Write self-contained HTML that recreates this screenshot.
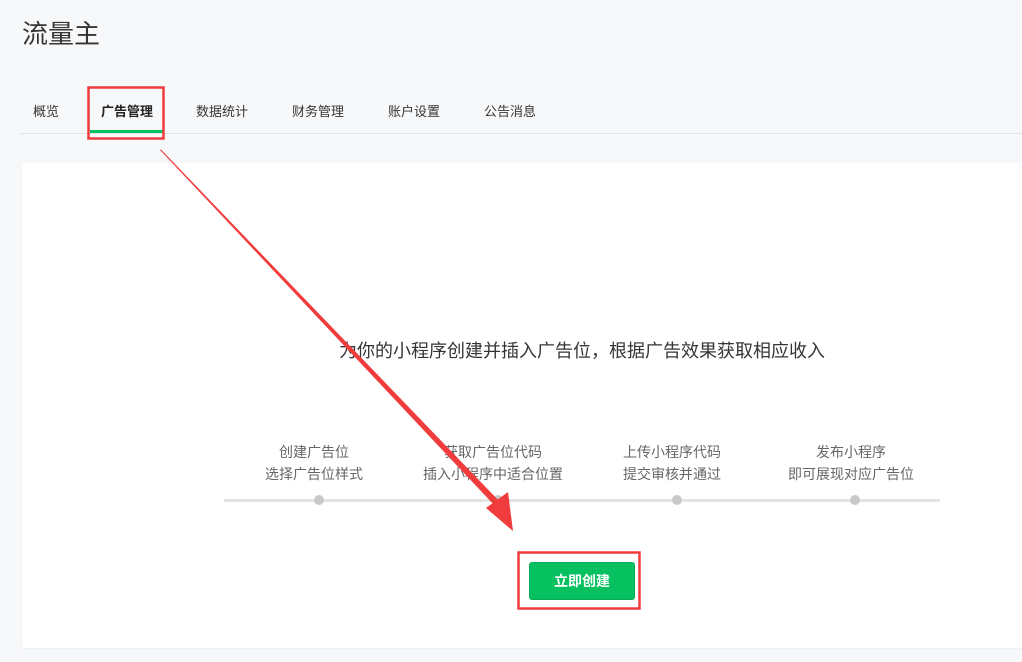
<!DOCTYPE html>
<html><head><meta charset="utf-8"><style>
body{margin:0;width:1022px;height:662px;background:#f7f8fa;font-family:"Liberation Sans","Noto Sans CJK SC",sans-serif;position:relative;overflow:hidden;color:#353535}
.abs{position:absolute}
.title{left:22px;top:14px;font-size:26px;color:#353535}
.tab{top:101px;font-size:13px;color:#353535}
.card{left:22px;top:163px;width:1010px;height:485px;background:#fff;border-radius:3px;box-shadow:0 1px 2px rgba(0,0,0,.05)}
.step{width:200px;text-align:center;font-size:14px;color:#666;line-height:22px;top:441px}
.dot{width:10px;height:10px;border-radius:50%;background:#c8c8c8;top:495px}
</style></head><body>
<div class="abs title">流量主</div>
<div class="abs tab" style="left:33px">概览</div>
<div class="abs tab" style="left:101px;font-weight:bold;color:#222">广告管理</div>
<div class="abs tab" style="left:196px">数据统计</div>
<div class="abs tab" style="left:292px">财务管理</div>
<div class="abs tab" style="left:388px">账户设置</div>
<div class="abs tab" style="left:484px">公告消息</div>
<div class="abs" style="left:20px;top:133px;width:1002px;height:1px;background:#e2e4e8"></div>
<div class="abs" style="left:90px;top:130px;width:73px;height:3px;background:#07c160"></div>
<div class="abs card"></div>
<div class="abs" style="left:0;width:1164px;text-align:center;top:337px;font-size:18px;color:#353535">为你的小程序创建并插入广告位，根据广告效果获取相应收入</div>
<div class="abs" style="left:224px;top:499px;width:716px;height:3px;background:#e3e3e3"></div>
<div class="abs step" style="left:214px">创建广告位<br>选择广告位样式</div>
<div class="abs step" style="left:393px">获取广告位代码<br>插入小程序中适合位置</div>
<div class="abs step" style="left:572px">上传小程序代码<br>提交审核并通过</div>
<div class="abs step" style="left:751px">发布小程序<br>即可展现对应广告位</div>
<div class="abs dot" style="left:314px"></div>
<div class="abs dot" style="left:493px"></div>
<div class="abs dot" style="left:672px"></div>
<div class="abs dot" style="left:850px"></div>
<div class="abs" style="left:529px;top:562px;width:104px;height:36px;background:#07c160;border:1px solid #06ad56;border-radius:3px;color:#fff;font-size:14px;font-weight:bold;text-align:center;line-height:36px">立即创建</div>
<svg class="abs" style="left:0;top:0" width="1022" height="662">
<rect x="88.5" y="87.5" width="75" height="51" fill="none" stroke="#f03c3c" stroke-width="2.5"/>
<rect x="518.5" y="552.5" width="121" height="56" fill="none" stroke="#f03c3c" stroke-width="2.5"/>
<polygon points="160,150 161,149.5 500,502 495,506" fill="#f03c3c"/>
<polygon points="513,531 486,508 508,492" fill="#f03c3c"/>
</svg>
</body></html>
